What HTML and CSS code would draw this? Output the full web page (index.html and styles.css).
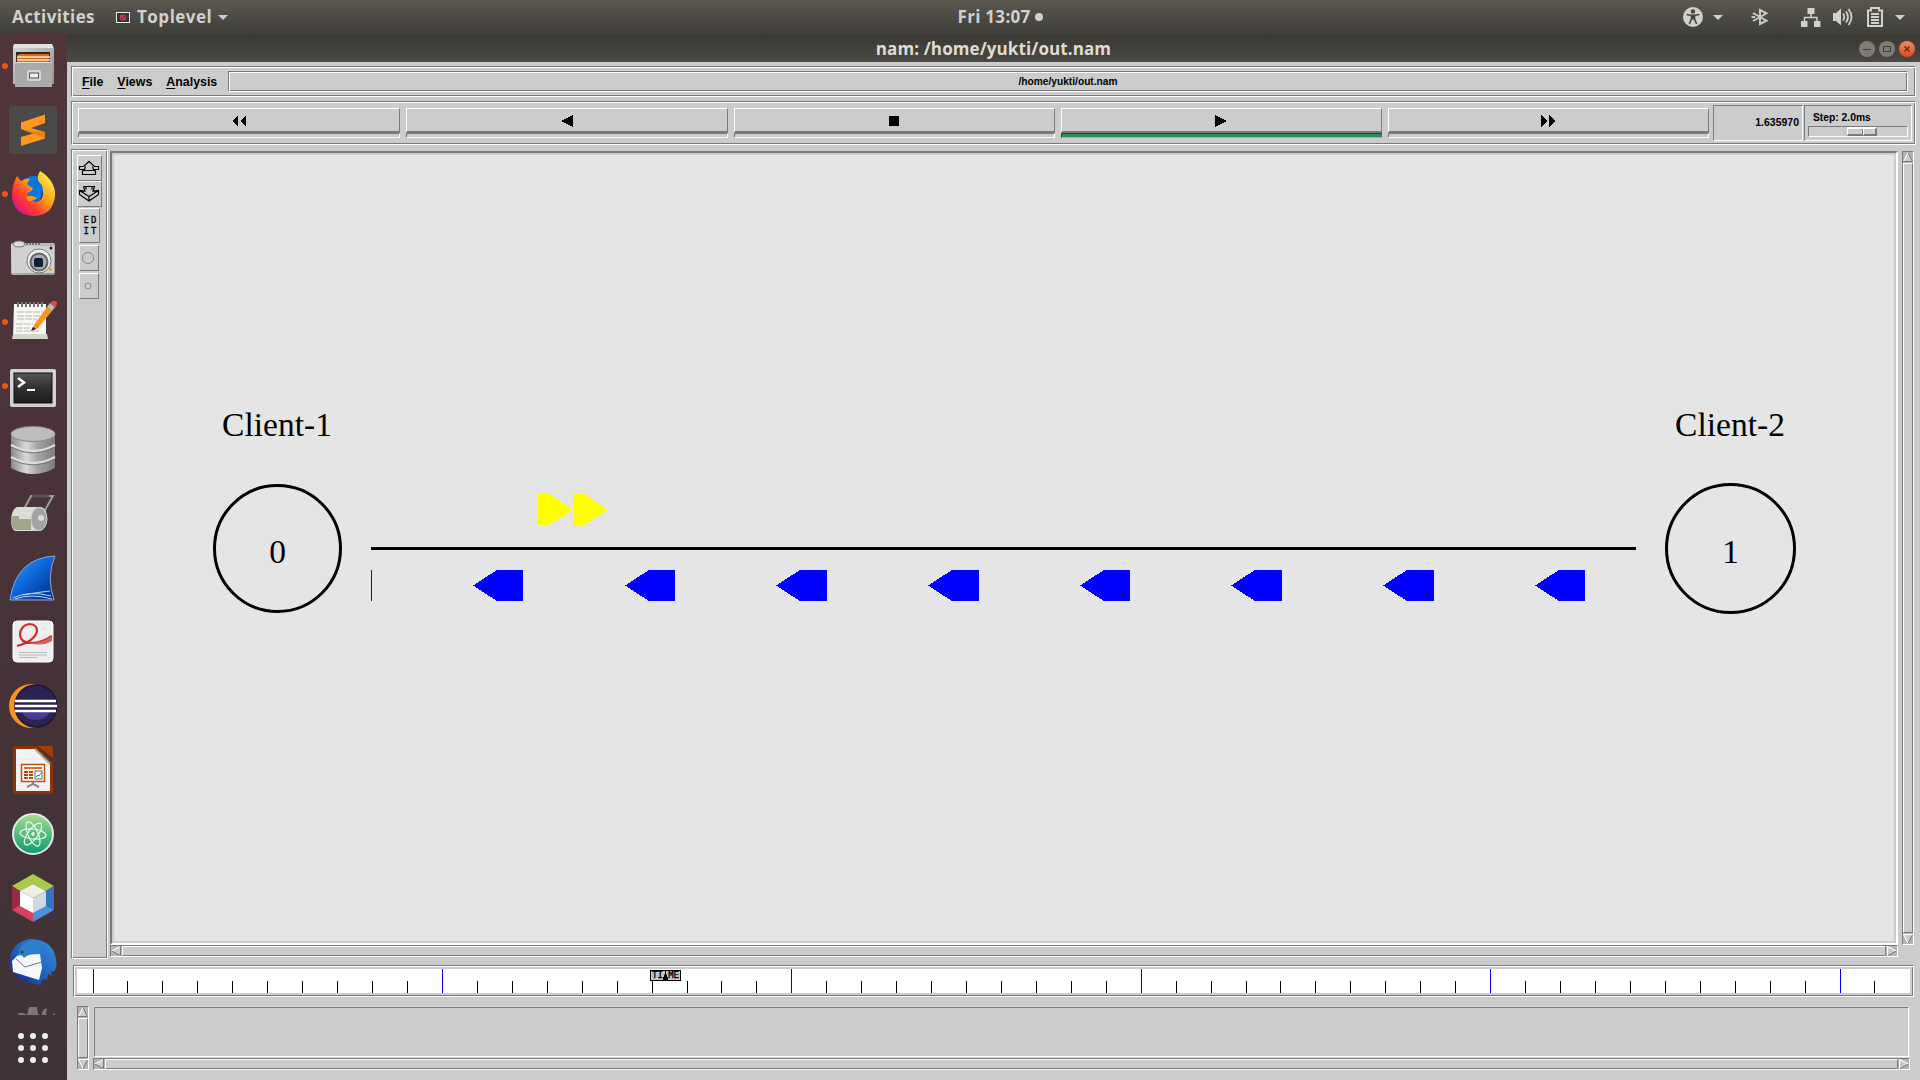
FILE: index.html
```html
<!DOCTYPE html>
<html lang="en">
<head>
<meta charset="utf-8">
<title>nam: /home/yukti/out.nam</title>
<link rel="stylesheet" href="styles.css">
</head>
<body>
<svg class="defs" width="0" height="0">
  <defs>
    <linearGradient id="steel" x1="0" x2="1" y1="0" y2="0"><stop offset="0" stop-color="#8a8a8a"/><stop offset=".35" stop-color="#d9d9d9"/><stop offset=".6" stop-color="#a5a5a5"/><stop offset="1" stop-color="#7c7c7c"/></linearGradient>
    <linearGradient id="silver" x1="0" x2="1" y1="0" y2="1"><stop offset="0" stop-color="#d8d8d8"/><stop offset="1" stop-color="#8f8f8f"/></linearGradient>
    <linearGradient id="foxfire" x1=".9" x2=".1" y1=".1" y2=".9"><stop offset="0" stop-color="#fff04a"/><stop offset=".4" stop-color="#ffa016"/><stop offset=".7" stop-color="#ff3a30"/><stop offset="1" stop-color="#d9108a"/></linearGradient>
    <linearGradient id="fin" x1="0" x2="1" y1="0" y2="1"><stop offset="0" stop-color="#2a9cff"/><stop offset=".5" stop-color="#0b62d6"/><stop offset="1" stop-color="#07267e"/></linearGradient>
    <linearGradient id="atom" x1="0" x2="0" y1="0" y2="1"><stop offset="0" stop-color="#a6dc94"/><stop offset="1" stop-color="#0a9d6c"/></linearGradient>
    <linearGradient id="bird" x1="1" x2="0" y1="0" y2="1"><stop offset="0" stop-color="#3c8fe0"/><stop offset=".6" stop-color="#1c5bb5"/><stop offset="1" stop-color="#1b1668"/></linearGradient>
    <linearGradient id="screen" x1="0" x2="0" y1="0" y2="1"><stop offset="0" stop-color="#555"/><stop offset=".5" stop-color="#303030"/><stop offset="1" stop-color="#1c1c1c"/></linearGradient>
    <linearGradient id="ubuntured" x1="0" x2="0" y1="0" y2="1"><stop offset="0" stop-color="#f38a68"/><stop offset="1" stop-color="#dd4814"/></linearGradient>
    <symbol id="up" viewBox="0 0 10 10"><path d="M5 0L10 10H0Z" fill="#ccc"/><path d="M.5 9.5L5 .5" stroke="#fff" fill="none"/><path d="M5 .5L9.5 9.5H0" stroke="#7a7a7a" fill="none"/></symbol>
    <symbol id="down" viewBox="0 0 10 10"><path d="M0 0H10L5 10Z" fill="#ccc"/><path d="M10 .5H.5L5 9.5" stroke="#fff" fill="none"/><path d="M5 9.5L9.5 1" stroke="#7a7a7a" fill="none"/></symbol>
    <symbol id="left" viewBox="0 0 10 10"><path d="M0 5L10 0V10Z" fill="#ccc"/><path d="M.5 5L9.5 .5" stroke="#fff" fill="none"/><path d="M.5 5L9.5 9.5V0" stroke="#7a7a7a" fill="none"/></symbol>
    <symbol id="right" viewBox="0 0 10 10"><path d="M0 0L10 5L0 10Z" fill="#ccc"/><path d="M.5 10V.5L9.5 5" stroke="#fff" fill="none"/><path d="M9.5 5L1 9.5" stroke="#7a7a7a" fill="none"/></symbol>
    <path id="ack" d="M0 0H11L35 16L11 31H0Z" fill="#ff0"/>
    <path id="pkt" d="M0 15.500L24 0H50V31H24Z" fill="#00f"/>
    <path id="pkt-wide" d="M0 15.500L24 0H51V31H24Z" fill="#00f"/>
  </defs>
</svg>

<header class="topbar">
  <div class="topbar-left">
    <span class="activities">Activities</span>
    <svg class="app-glyph" width="14" height="11" viewBox="0 0 14 11"><rect x=".5" y=".5" width="13" height="10" fill="#34343a" stroke="#eee"/><circle cx="7" cy="5.5" r="2.7" fill="#8d1a24" stroke="#e04848"/><path d="M5 3.5l4 4" stroke="#e77"/></svg>
    <span class="app-name">Toplevel</span>
    <svg width="10" height="5" viewBox="0 0 10 5"><path d="M0 0H10L5 5Z" fill="#ccc"/></svg>
  </div>
  <div class="clock"><span>Fri 13:07</span><i class="clock-dot"></i></div>
  <div class="tray">
    <svg width="20" height="20" viewBox="0 0 20 20"><circle cx="10" cy="10" r="10" fill="#d0d0ce"/><circle cx="10" cy="4.500" r="2.200" fill="#45443e"/><path d="M3.500 7.500L8 8.200H12L16.500 7.500M8.500 8.500V12L6.300 17M11.500 8.500V12L13.700 17" fill="none" stroke="#45443e" stroke-width="1.600"/><path d="M8 8h4v4.500H8Z" fill="#45443e"/></svg>
    <svg class="arrow-a" width="10" height="5" viewBox="0 0 10 5"><path d="M0 0H10L5 5Z" fill="#d0d0ce"/></svg>
    <svg class="bluetooth" width="18" height="18" viewBox="0 0 18 18"><path d="M2 5L15.500 12.700L9 16V2L15.500 5.400L2 13M.5 9H4" fill="none" stroke="#c8c8c6" stroke-width="2"/></svg>
    <svg class="network" width="20" height="20" viewBox="0 0 20 20"><path d="M6.500 1h7v6h-7ZM0 14h6.500v6H0ZM13 14h6.500v6H13Z" fill="#d0d0ce"/><path d="M10 6v4M3.500 14v-3.500h12.500V14" fill="none" stroke="#d0d0ce" stroke-width="1.500"/></svg>
    <svg class="volume" width="20" height="18" viewBox="0 0 20 18"><path d="M0 5h3L8 .5v17L3 13H0Z" fill="#d0d0ce"/><path d="M10 5.500q2.500 3.500 0 7M13 3.500q4 5.500 0 11M15.500 1q6 8 0 16" fill="none" stroke="#d0d0ce" stroke-width="1.800"/></svg>
    <svg class="battery" width="16" height="20" viewBox="0 0 16 20"><path d="M1 3.500H4V1H12V3.500H15V19H1Z" fill="none" stroke="#d0d0ce" stroke-width="2"/><path d="M4 7h8M4 10h8M4 13h8M4 16h8" stroke="#d0d0ce" stroke-width="2"/></svg>
    <svg class="arrow-b" width="10" height="5" viewBox="0 0 10 5"><path d="M0 0H10L5 5Z" fill="#d0d0ce"/></svg>
  </div>
</header>

<div class="desktop">
  <nav class="dock">
    <div class="launchers">
      <div class="launcher running"><svg width="48" height="48" viewBox="0 0 48 48"><path d="M5 2H43L45 6V42H43V45H6V42H4V6Z" fill="url(#silver)"/><path d="M5 2H43L44 6H4Z" fill="#e4e4e4"/><rect x="7" y="10" width="34" height="10" fill="#33271d"/><path d="M8 13l3-1h29v8H8Z" fill="#d96a24"/><path d="M8 15H41M8 18H41" stroke="#ffe2b0" stroke-width="1.500"/><path d="M6 20H43V45H6Z" fill="#aaa"/><path d="M6 20.500H43" stroke="#ddd"/><rect x="18" y="28" width="14" height="11" rx="2" fill="#d5d5d5"/><rect x="20.500" y="31" width="9" height="5" fill="#eee" stroke="#555"/></svg></div>
      <div class="launcher"><svg width="48" height="48" viewBox="0 0 48 48"><rect width="48" height="48" rx="3" fill="#4a4a4a"/><path d="M12 16.500L36 8.500V17L22 22L36 26V32.500L12 40V31L26 27L12 23Z" fill="#ff9820"/><path d="M14 24l22 2v6Z" fill="#e88512"/></svg></div>
      <div class="launcher running"><svg width="48" height="48" viewBox="0 0 48 48"><circle cx="25" cy="23" r="17" fill="#0877dd"/><path d="M13 26q7 11 18 4q8-6 5-17L31 30L20 33Z" fill="#272a8c"/><path d="M31 1Q47 11 46 26Q44 45 25 46Q5 45 3 27Q2 18 8 6L12 11Q17 8 21 9Q17 14 19 15L24 18Q23 22 18 23Q18 31 27 32Q35 31 34 21Q34 15 30 12Q27 8 31 1Z" fill="url(#foxfire)"/><path d="M17 27Q22 24 28 28Q24 32 19 31Z" fill="#ff9518"/></svg></div>
      <div class="launcher"><svg width="48" height="48" viewBox="0 0 48 48"><rect x="2" y="9" width="44" height="32" rx="2" fill="url(#silver)"/><rect x="3" y="12" width="42" height="27" fill="#d0d0d0"/><ellipse cx="10" cy="10" rx="6" ry="3" fill="#ddd" stroke="#777"/><path d="M17 10H32" stroke="#777" stroke-width="2" stroke-dasharray="2 1"/><circle cx="30" cy="27" r="12" fill="#eee" stroke="#777"/><circle cx="30" cy="28" r="8.500" fill="#aaa" stroke="#666" stroke-width="2"/><rect x="25" y="24" width="9" height="9" rx="2" fill="#0c1b38"/><circle cx="42" cy="14" r="1.500" fill="#222"/><rect x="40" y="34" width="3" height="3" fill="#e9a33a"/></svg></div>
      <div class="launcher running"><svg width="48" height="48" viewBox="0 0 48 48"><path d="M5 6H37V40H4Z" fill="#f7f7f3"/><path d="M4 36H38L39 41H3Z" fill="#d5d6ca"/><path d="M9 4v5M13 4v5M17 4v5M21 4v5M25 4v5M29 4v5M33 4v5" stroke="#777" stroke-width="2"/><path d="M8 14H34M8 18H34M8 21H28M7 26H24M7 30H21M7 33H30" stroke="#b8b8b8" stroke-dasharray="7 1"/><path d="M22 33L25 27L38 9L43 13L29 30Z" fill="#f7971f"/><path d="M38 9l3-4 5 4-3 4Z" fill="#bbb"/><path d="M41.500 5Q44 1 48 4Q48 8 46 10Z" fill="#e24a48"/><path d="M22 33l2-4 3 2Z" fill="#222"/></svg></div>
      <div class="launcher running"><svg width="48" height="48" viewBox="0 0 48 48"><rect x="1" y="7" width="46" height="38" rx="2" fill="#d2d2d2"/><rect x="5" y="11" width="38" height="30" fill="url(#screen)" stroke="#111"/><path d="M9 16l6 4.500-6 4.500" fill="none" stroke="#fff" stroke-width="2.500"/><path d="M18 28h8" stroke="#fff" stroke-width="2"/></svg></div>
      <div class="launcher"><svg width="48" height="48" viewBox="0 0 48 48"><path d="M2 7V42Q24 54 46 42V7Z" fill="url(#steel)"/><path d="M2 19Q24 31 46 19M2 31Q24 43 46 31" stroke="#ddd" stroke-width="2.500" fill="none"/><path d="M2 21Q24 33 46 21M2 33Q24 45 46 33" stroke="#777" fill="none"/><ellipse cx="24" cy="8" rx="22" ry="7.500" fill="#bdbdbd" stroke="#888"/></svg></div>
      <div class="launcher"><svg width="48" height="48" viewBox="0 0 48 48"><path d="M15 19L22 6H44L32 27" fill="none" stroke="#9a9a9a" stroke-width="2"/><path d="M23 6H40" stroke="#555" stroke-width="3"/><path d="M8 17H32Q38 18 38 29Q37 39 31 41H6Q2 39 2 29Q3 19 8 17Z" fill="#dcdcd8"/><path d="M2 26H10V29H22V40H6Q2 38 2 26Z" fill="#a3a58c"/><ellipse cx="30" cy="29" rx="8" ry="11.500" fill="#a3a3a3" stroke="#ccc"/><circle cx="32" cy="28" r="3" fill="#ddd"/></svg></div>
      <div class="launcher"><svg width="48" height="48" viewBox="0 0 48 48"><path d="M1 46Q7 4 46 2Q37 22 45 46Z" fill="url(#fin)" stroke="#8aaad0"/><path d="M4 44Q20 36 42 42M6 45Q22 39 43 45M14 41Q30 38 41 37" fill="none" stroke="#b6d2ff"/></svg></div>
      <div class="launcher"><svg width="48" height="48" viewBox="0 0 48 48"><rect x="4" y="3" width="40" height="41" rx="4" fill="#eee" stroke="#fff"/><path d="M8 28Q26 23 28 13Q28 6 20 6Q11 8 11 17Q12 25 22 25Q33 25 43 18" fill="none" stroke="#d22c2c" stroke-width="2.200"/><path d="M20 25Q34 25 43 18V23Q33 29 20 25Z" fill="#e45b5b"/><path d="M10 34.500H38M10 37H38M10 39.500H28" stroke="#bbb"/></svg></div>
      <div class="launcher"><svg width="48" height="48" viewBox="0 0 48 48"><ellipse cx="22" cy="24" rx="22" ry="22" fill="#f7941e"/><circle cx="27" cy="24" r="21" fill="#2c2255" stroke="#1a1733" stroke-width="1.500"/><path d="M13 30H41Q36 38 27 38Q17 38 13 30Z" fill="#4a3b94"/><path d="M6 19H47M6 24H48M6 29H47" stroke="#fff" stroke-width="2.300"/></svg></div>
      <div class="launcher"><svg width="48" height="48" viewBox="0 0 48 48"><path d="M4 2Q4 0 6 0H27L44 17V46Q44 48 42 48H6Q4 48 4 46Z" fill="#8d3305"/><path d="M7 3H26L41 18V45H7Z" fill="#f2f2f2"/><path d="M28 0H42Q44 0 44 2V12Z" fill="#a33e03"/><path d="M26 3L41 18" stroke="#aaa" stroke-width="2"/><rect x="12.500" y="18.500" width="23" height="17" fill="#fff" stroke="#c34e12" stroke-width="1.500"/><path d="M15 22H33" stroke="#e06a30" stroke-width="2"/><path d="M15 26h9M15 29h9M15 32h9" stroke="#b24412" stroke-width="2" stroke-dasharray="4 1"/><rect x="26" y="25" width="7" height="8" fill="#fff" stroke="#666"/><path d="M27 31l2-2 1 1 3-4" stroke="#2a3" fill="none"/><path d="M24 36v2l-6 3M24 38l6 3" stroke="#888" stroke-width="2" fill="none"/></svg></div>
      <div class="launcher"><svg width="48" height="48" viewBox="0 0 48 48"><circle cx="24" cy="24" r="20" fill="url(#atom)" stroke="#e6e6e6" stroke-width="2"/><g fill="none" stroke="#e9fff0" stroke-width="1.200"><ellipse cx="24" cy="24" rx="13" ry="5" transform="rotate(6 24 24)"/><ellipse cx="24" cy="24" rx="13" ry="5" transform="rotate(66 24 24)"/><ellipse cx="24" cy="24" rx="13" ry="5" transform="rotate(126 24 24)"/></g><circle cx="24" cy="24" r="1.800" fill="#fff"/></svg></div>
      <div class="launcher"><svg width="48" height="48" viewBox="0 0 48 48"><path d="M24 0L45 12L37 17L24 10L11 17L3 12Z" fill="#adc94b"/><path d="M3 12L11 17V32L3 36Z" fill="#9a2948"/><path d="M3 36L11 31L24 39V48Z" fill="#d83f62"/><path d="M45 36L37 31L24 39V48Z" fill="#4a92dd"/><path d="M45 12L37 17V31L45 36Z" fill="#3473c4"/><path d="M24 10L37 17L24 24L11 17Z" fill="#eef2df"/><path d="M11 17L24 24V39L11 32Z" fill="#fff"/><path d="M37 17L24 24V39L37 32Z" fill="#cfd9e4"/></svg></div>
      <div class="launcher"><svg width="48" height="48" viewBox="0 0 48 48"><path d="M20 1Q39 1 45 14Q50 27 45 34L42 33L43 38L39 36L38 42L34 41L31 47L21 45Q5 42 1 28Q-1 10 14 3Z" fill="url(#bird)"/><path d="M3 23L9 17L31 16L33 30L30 42L4 34Z" fill="#f6f7fb"/><path d="M7 21L16 29L33 24" stroke="#777" fill="none"/><path d="M9 18Q11 3 25 3Q37 6 31 16Q22 14 15 20Q13 16 9 18Z" fill="#2d80cc"/><circle cx="13" cy="14" r="1.500" fill="#532"/></svg></div>
      <div class="launcher"><svg width="48" height="48" viewBox="0 0 48 48"><path d="M6 17L10 11L15 11L18 13L20 5H28L29 12L33 14Q32 8 38 6L37 12L41 15L46 11V20H6Z" fill="#7d7778"/></svg></div>
    </div>
    <div class="apps-button"><svg width="32" height="32" viewBox="0 0 32 32" fill="#eee"><circle cx="4" cy="4" r="3"/><circle cx="16" cy="4" r="3"/><circle cx="28" cy="4" r="3"/><circle cx="4" cy="16" r="3"/><circle cx="16" cy="16" r="3"/><circle cx="28" cy="16" r="3"/><circle cx="4" cy="28" r="3"/><circle cx="16" cy="28" r="3"/><circle cx="28" cy="28" r="3"/></svg></div>
  </nav>

  <section class="window">
    <div class="titlebar">
      <span class="title">nam: /home/yukti/out.nam</span>
      <div class="window-buttons">
        <svg width="16" height="16" viewBox="0 0 16 16"><circle cx="8" cy="8" r="8" fill="#7e7c74"/><path d="M4 8.500h8" stroke="#3d3c37"/></svg>
        <svg width="16" height="16" viewBox="0 0 16 16"><circle cx="8" cy="8" r="8" fill="#7e7c74"/><rect x="4.500" y="5.500" width="7" height="5" fill="none" stroke="#3d3c37"/></svg>
        <svg width="16" height="16" viewBox="0 0 16 16"><circle cx="8" cy="8" r="8" fill="url(#ubuntured)"/><path d="M5.500 5.500l5 5M10.500 5.500l-5 5" stroke="#5a2a17" stroke-width="1.300"/></svg>
      </div>
    </div>

    <div class="menubar groove">
      <div class="menus">
        <span><u>F</u>ile</span>
        <span><u>V</u>iews</span>
        <span><u>A</u>nalysis</span>
      </div>
      <div class="path groove">/home/yukti/out.nam</div>
    </div>

    <div class="toolbar groove">
      <div class="transport">
        <div class="control"><button class="control-button"><svg width="14" height="12" viewBox="0 0 14 12"><path d="M6 0V12L0 6ZM14 0V12L8 6Z"/></svg></button><i class="lamp"></i></div>
        <div class="control"><button class="control-button"><svg width="12" height="12" viewBox="0 0 12 12"><path d="M12 0V12L0 6Z"/></svg></button><i class="lamp"></i></div>
        <div class="control"><button class="control-button narrow"><svg width="10" height="10" viewBox="0 0 10 10"><path d="M0 0H10V10H0Z"/></svg></button><i class="lamp"></i></div>
        <div class="control"><button class="control-button narrow"><svg width="12" height="12" viewBox="0 0 12 12"><path d="M0 0V12L12 6Z"/></svg></button><i class="lamp on"></i></div>
        <div class="control"><button class="control-button narrow"><svg width="14" height="12" viewBox="0 0 14 12"><path d="M0 0V12L6 6ZM8 0V12L14 6Z"/></svg></button><i class="lamp"></i></div>
      </div>
      <div class="time sunken">1.635970</div>
      <div class="step sunken">
        <span>Step: 2.0ms</span>
        <div class="trough sunken"><i class="thumb"><b></b></i></div>
      </div>
    </div>

    <div class="main">
      <div class="tools groove">
        <button class="tool zoom-tool"><svg width="22" height="15" viewBox="0 0 22 15" fill="none" stroke="#000" stroke-width="1.200"><path d="M11 .5L16.500 5.500H20.500V8.500H15.500L14.500 5.500M11 .5L5.500 5.500H1.500V8.500H6.500L7.500 5.500M6.500 8.500L4.500 10V13.500H17.500V10L15.500 8.500M5 9.500H17"/></svg></button>
        <button class="tool zoom-tool"><svg width="22" height="16" viewBox="0 0 22 16" fill="none" stroke="#000" stroke-width="1.200"><path d="M5.500 .5H16.500L15 5L20.500 4.500V8.500L11 15L1.500 8.500V4.500L7 5L5.500 .5M1.500 4.500L11 10.500L20.500 4.500M11 10.500V15M8 .5V3.500M14 .5V3.500"/></svg></button>
        <button class="tool edit-tool"><span>ED</span><span>IT</span></button>
        <button class="tool size-tool"><svg width="12" height="12" viewBox="0 0 12 12"><circle cx="6" cy="6" r="5.500" fill="none" stroke="#888"/></svg></button>
        <button class="tool size-tool"><svg width="8" height="8" viewBox="0 0 8 8"><circle cx="4" cy="4" r="3" fill="none" stroke="#888"/></svg></button>
      </div>
      <div class="view">
        <div class="canvas">
          <svg width="1780" height="786" viewBox="114 155 1780 786">
            <g fill="none" stroke="#000" stroke-width="3">
              <circle cx="277.500" cy="548.500" r="63"/>
              <circle cx="1730.500" cy="548.500" r="64"/>
            </g>
            <path d="M371 547H1636V550H371Z"/>
            <path d="M371 570h1v31h-1Z" fill="#00f"/>
            <g shape-rendering="crispEdges">
              <use href="#ack" x="538" y="494"/><use href="#ack" x="573" y="494"/>
              <use href="#pkt" x="473" y="570"/><use href="#pkt" x="625" y="570"/><use href="#pkt-wide" x="776" y="570"/><use href="#pkt-wide" x="928" y="570"/>
              <use href="#pkt" x="1080" y="570"/><use href="#pkt-wide" x="1231" y="570"/><use href="#pkt-wide" x="1383" y="570"/><use href="#pkt" x="1535" y="570"/>
            </g>
            <g class="node-text">
              <text x="277" y="436">Client-1</text><text x="277.500" y="562.500">0</text>
              <text x="1730" y="436">Client-2</text><text x="1730.500" y="562.500">1</text>
            </g>
          </svg>
        </div>
        <div class="scroll-h"><svg width="10" height="10"><use href="#left"/></svg><i class="scroll-thumb"></i><svg width="10" height="10"><use href="#right"/></svg></div>
      </div>
      <div class="scroll-v main-scroll"><svg width="10" height="10"><use href="#up"/></svg><i class="scroll-thumb"></i><svg width="10" height="10"><use href="#down"/></svg></div>
    </div>

    <div class="timeline groove">
      <svg width="1833" height="24" shape-rendering="crispEdges">
        <path d="M15.520 18H1820" stroke="#000" stroke-width="12" stroke-dasharray="1 33.940"/>
        <path d="M15.520 12H1820" stroke="#00f" stroke-width="24" stroke-dasharray="1 348.400"/>
      </svg>
      <div class="time-marker"><span>TI</span><svg width="5" height="9" viewBox="0 0 5 9"><path d="M2 0h1v3l1 1v2h1v3H0V6h1V4l1-1Z"/></svg><span>ME</span></div>
    </div>

    <div class="notes">
      <div class="scroll-v"><svg width="10" height="10"><use href="#up"/></svg><i class="scroll-thumb"></i><svg width="10" height="10"><use href="#down"/></svg></div>
      <div class="notes-view">
        <div class="notes-frame"><div class="notes-text sunken"></div></div>
        <div class="scroll-h"><svg width="10" height="10"><use href="#left"/></svg><i class="scroll-thumb"></i><svg width="10" height="10"><use href="#right"/></svg></div>
      </div>
    </div>
  </section>
</div>
</body>
</html>
```
FILE: styles.css
```css
* { box-sizing: border-box; }
body {
  margin: 0;
  width: 1920px;
  height: 1080px;
  overflow: hidden;
  display: flex;
  flex-direction: column;
  background: #ccc;
  color: #000;
  font-family: "Liberation Sans", Arial, sans-serif;
}
svg { display: block; flex: none; }
.defs { position: absolute; }
button { font: inherit; color: inherit; padding: 0; margin: 0; }

/* Top panel */
.topbar {
  flex: none;
  height: 34px;
  display: grid;
  grid-template-columns: 1fr auto 1fr;
  align-items: center;
  background: linear-gradient(#5a574f, #3f3e39);
  color: #d0d0ce;
  font: 700 17px/34px "Open Sans", "Noto Sans", sans-serif;
}
.topbar-left { display: flex; align-items: center; padding-left: 12px; }
.activities { width: 104px; letter-spacing: .4px; }
.app-name { width: 77px; margin-left: 7px; margin-right: 4px; letter-spacing: .5px; }
.clock { display: flex; align-items: center; gap: 5px; margin-left: 80px; }
.clock span { width: 72px; letter-spacing: .3px; white-space: nowrap; }
.clock-dot { width: 8px; height: 8px; border-radius: 50%; background: #d0d0ce; }
.tray { display: flex; align-items: center; justify-content: flex-end; padding-right: 15px; }
.arrow-a { margin-left: 10px; }
.bluetooth { margin-left: 28px; }
.network { margin-left: 32px; }
.volume { margin-left: 12px; }
.battery { margin-left: 14px; }
.arrow-b { margin-left: 12px; }

.desktop { flex: 1; display: flex; min-height: 0; }

/* Dock */
.dock {
  flex: none;
  width: 67px;
  display: flex;
  flex-direction: column;
  background: linear-gradient(#50363b, #463238 60%, #3f3236);
}
.launchers { height: 981px; overflow: hidden; }
.launcher { height: 64px; display: flex; align-items: center; padding-left: 9px; }
.running { padding-left: 2px; gap: 1px; }
.running::before { content: ""; width: 6px; height: 6px; border-radius: 50%; background: #e95420; }
.apps-button { flex: 1; padding: 17px 0 0 17px; }

/* Window frame */
.window { flex: 1; min-width: 0; display: flex; flex-direction: column; background: #ccc; }
.titlebar {
  flex: none;
  height: 28px;
  display: grid;
  grid-template-columns: 1fr auto 1fr;
  align-items: center;
  background: linear-gradient(#393833, #4a4943);
  color: #dfdbd2;
  font: 700 17px/30px "Open Sans", "Noto Sans", sans-serif;
}
.title { grid-column: 2; letter-spacing: .1px; }
.window-buttons { display: flex; gap: 4px; justify-content: flex-end; padding-right: 5px; }

/* Tk reliefs */
.groove {
  border: 1px solid;
  border-color: #7a7a7a #fff #fff #7a7a7a;
  box-shadow: inset 1px 1px #fff, inset -1px -1px #7a7a7a;
}
.sunken { border: 1px solid; border-color: #7a7a7a #fff #fff #7a7a7a; }

/* Menu bar */
.menubar {
  flex: none;
  height: 31px;
  margin: 4px 4px 0;
  padding: 4px 7px 4px 10px;
  display: flex;
  justify-content: space-between;
  font-weight: bold;
  font-size: 12.400px;
  line-height: 23px;
}
.menus { display: flex; gap: 14px; }
.menus u { text-underline-offset: 2px; text-decoration-thickness: 1px; text-decoration-skip-ink: none; }
.path { width: 1680px; text-align: center; font-size: 10.200px; line-height: 19px; }

/* Transport controls */
.toolbar { flex: none; height: 44px; margin: 4px 4px 0; padding: 3px 3px 3px 6px; display: flex; font-weight: bold; }
.transport { display: grid; grid-template-columns: 322px 322px 321px 321px 321px; column-gap: 6px; padding-top: 3px; margin-right: 4px; }
.control-button {
  display: flex;
  align-items: center;
  justify-content: center;
  width: 100%;
  height: 25px;
  padding-top: 2px;
  background: #ccc;
  border: solid;
  border-width: 1px 1px 2px;
  border-color: #fff #7a7a7a #7a7a7a #fff;
}
.narrow { padding-right: 1px; }
.control-button svg { shape-rendering: crispEdges; }
.lamp { display: block; height: 5px; border: 1px solid; border-color: #7a7a7a #fff #fff #7a7a7a; }
.on { background: #2e8b57; border-color: #174d2e #2e8b57 #7dc49a #174d2e; }
.time { width: 90px; padding-right: 3px; text-align: right; font-size: 10.500px; line-height: 33px; }
.step { width: 108px; margin-left: 1px; padding: 4px 3px 0; font-size: 10.300px; line-height: 16px; }
.step span { display: block; padding-left: 5px; height: 16px; }
.trough { height: 11px; padding-left: 38px; }
.thumb { display: block; width: 30px; height: 9px; border: solid; border-width: 2px 2px 2px 1px; border-color: #fff #7a7a7a #7a7a7a #fff; }
.thumb b { display: block; width: 15px; height: 6px; border-right: 1px solid #7a7a7a; box-shadow: 1px 0 #fff; }

/* Drawing area */
.main { flex: none; height: 810px; margin: 4px 6px 0 4px; display: flex; }
.tools { width: 37px; padding: 5px 5px 0; display: flex; flex-direction: column; align-items: flex-start; }
.tool {
  flex: none;
  display: flex;
  align-items: center;
  justify-content: center;
  background: #ccc;
  border: 1px solid;
  border-color: #fff #7a7a7a #7a7a7a #fff;
}
.zoom-tool { width: 25px; height: 26px; padding-right: 1px; }
.edit-tool {
  width: 21px;
  height: 35px;
  margin: 1px 0 2px 2px;
  flex-direction: column;
  font: 9px/11px "DejaVu Sans Mono", monospace;
  letter-spacing: 2px;
  padding-left: 3px;
  -webkit-text-stroke: .3px #000;
}
.size-tool { width: 20px; height: 26px; margin: 0 0 2px 2px; padding-right: 2px; padding-bottom: 1px; }
.view { width: 1788px; margin: 2px 0 0 2px; display: flex; flex-direction: column; }
.canvas {
  width: 1788px;
  height: 794px;
  padding: 2px;
  border: 2px solid;
  border-color: #7a7a7a #fff #fff #7a7a7a;
}
.canvas > svg { background: #e5e5e5; }
.node-text { font: 33.500px "Liberation Serif", "Times New Roman", serif; text-anchor: middle; }

/* Scrollbars */
.scroll-h, .scroll-v {
  display: flex;
  gap: 1px;
  background: #b3b3b3;
  border: 1px solid;
  border-color: #7a7a7a #fff #fff #7a7a7a;
}
.scroll-h { height: 12px; }
.scroll-v { width: 12px; flex-direction: column; }
.scroll-thumb { flex: 1; background: #ccc; border: 1px solid; border-color: #fff #7a7a7a #7a7a7a #fff; }
.main-scroll { height: 794px; margin: 2px 0 0 4px; }

/* Time slider */
.timeline { flex: none; height: 32px; margin: 6px 6px 0 6px; padding: 3px; position: relative; }
.timeline > svg { background: #fff; }
.time-marker {
  position: absolute;
  left: 576px;
  top: 4px;
  width: 31px;
  height: 11px;
  padding: 0 1px;
  display: flex;
  align-items: center;
  justify-content: space-between;
  background: #c4c4c4;
  border: 1px solid #000;
  font: 9px/9px "DejaVu Sans Mono", monospace;
  -webkit-text-stroke: .3px #000;
}

/* Annotation list */
.notes { flex: none; height: 64px; margin: 9px 10px 0; display: flex; gap: 4px; }
.notes-view { flex: 1; display: flex; flex-direction: column; }
.notes-frame { height: 52px; border: 1px solid #d9d9d9; }
.notes-text { height: 50px; }
```
